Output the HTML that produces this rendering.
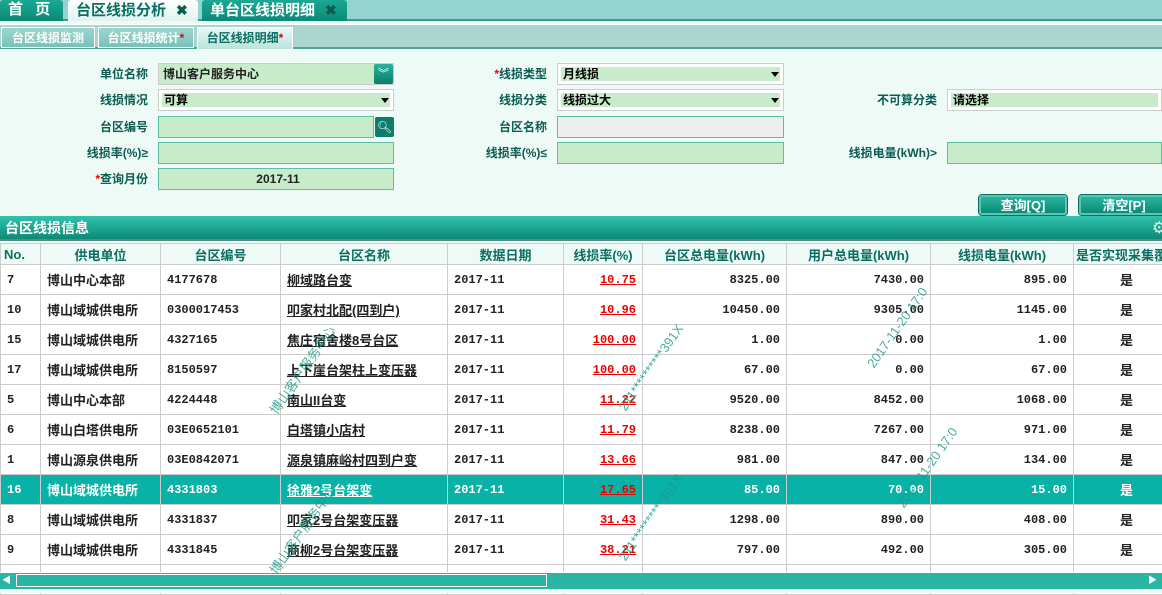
<!DOCTYPE html><html><head><meta charset="utf-8"><style>
*{box-sizing:border-box;margin:0;padding:0}
body{width:1162px;height:593px;overflow:hidden;background:#eefaf6;font-family:"Liberation Sans","Noto Sans CJK SC",sans-serif;font-size:12px;position:relative}
.abs{position:absolute}
.top{left:0;top:0;width:1162px;height:21px;background:#93d4d0;border-bottom:2px solid #3a9a8c}
.t{top:0;height:21px;color:#fff;font-size:15px;font-weight:bold;line-height:20px;padding-left:8px;background:linear-gradient(#1aa894,#0b8a76);border-radius:3px 3px 0 0}
.t.on{background:linear-gradient(#fff,#dff3ef);color:#0b6e62}
.x{color:#0b5c52;font-size:14px;margin-left:10px}
.sub{left:0;top:24px;width:1162px;height:25px;background:#acd5d0;border-top:1px solid #fff;border-bottom:2px solid #4aa597}
.st{top:27px;height:21px;color:#fff;font-weight:bold;font-size:12px;line-height:20px;text-align:center;background:linear-gradient(#9bd6ce,#78c2b8);border:1px solid #fff}
.st.on{background:linear-gradient(#e8f7f4,#b8e4dc);color:#0b6e62;height:23px}
.lb{font-weight:bold;color:#0b5c52;text-align:right;font-size:12px;line-height:22px}
.in{height:22px;background:#c8ecca;border:1px solid #5bbfa8;line-height:20px;padding-left:4px;font-weight:bold;color:#222}
.sel{background:#fff;border:1px solid #ccc;padding:3px}
.sel div{background:#c8ecca;height:14px;line-height:14px;font-weight:bold;padding-left:2px}
.arr{position:absolute;right:4px;top:8px;border:4px solid transparent;border-top:5px solid #000}
.btn{top:195px;height:20px;color:#fff;font-weight:bold;text-align:center;line-height:17px;font-size:13px;background:linear-gradient(#28b49e,#0b8a76);border:2px solid #5fc3b2;border-radius:3px;outline:1px solid #0b6e62}
.hd{left:0;top:216px;width:1162px;height:25px;background:linear-gradient(#31c2ae,#0b8a76);color:#fff;font-weight:bold;font-size:14px;line-height:25px;padding-left:5px;border-bottom:2px solid #5a8a84}
table{position:absolute;left:0;top:243px;border-collapse:collapse;table-layout:fixed;width:1180px;background:#fff}
td,th{border:1px solid #ccc;height:30px;white-space:nowrap;overflow:hidden;font-family:"Liberation Mono","Noto Sans CJK SC",monospace;font-size:12px;font-weight:bold;color:#222;padding:0 6px}
th{height:21px;background:#eefaf6;color:#0b6e62;font-family:"Liberation Sans","Noto Sans CJK SC",sans-serif;font-size:13px}
td.c{font-family:"Liberation Sans","Noto Sans CJK SC",sans-serif;font-size:13px}
td.n{text-align:right}
td.u{text-decoration:underline;font-family:"Liberation Sans","Noto Sans CJK SC",sans-serif;font-size:13px}
td.r{color:#e00;text-decoration:underline;text-align:right}
tr.hl td{background:#08b2a6;color:#fff}
tr.hl td.r{color:#e00}
.sb{left:0;top:572px;width:1162px;height:17px;background:#2ab5a3;border-top:1px solid #fff}
.wm{color:#1a9a88;font-size:13px;opacity:.8;transform:rotate(-55deg);white-space:nowrap}
</style></head><body>
<div class="abs top"></div>
<div class="abs t" style="left:0;width:63px;letter-spacing:4px">首 页</div>
<div class="abs t on" style="left:68px;width:130px">台区线损分析<span class="x">✖</span></div>
<div class="abs t" style="left:202px;width:145px">单台区线损明细<span class="x">✖</span></div>
<div class="abs sub"></div>
<div class="abs st" style="left:1px;width:94px">台区线损监测</div>
<div class="abs st" style="left:98px;width:96px">台区线损统计<span style="color:#e00">*</span></div>
<div class="abs st on" style="left:197px;width:96px">台区线损明细<span style="color:#e00">*</span></div>

<div class="abs lb" style="left:40px;width:108px;top:63px">单位名称</div>
<div class="abs in" style="left:158px;top:63px;width:236px;border-color:#ccc">博山客户服务中心</div>
<div class="abs" style="left:374px;top:64px;width:19px;height:20px;background:linear-gradient(#27b39e,#0b7d6a);color:#fff;font-size:11px;text-align:center;line-height:20px;border-radius:2px">︾</div>
<div class="abs lb" style="left:40px;width:108px;top:89px">线损情况</div>
<div class="abs sel" style="left:158px;top:89px;width:236px;height:22px"><div>可算</div><span class="arr"></span></div>
<div class="abs lb" style="left:40px;width:108px;top:116px">台区编号</div>
<div class="abs in" style="left:158px;top:116px;width:216px"></div>
<div class="abs" style="left:375px;top:117px;width:19px;height:20px;background:#0b7d6a;color:#fff;text-align:center;line-height:20px;border-radius:2px">🔍︎</div>
<div class="abs lb" style="left:40px;width:108px;top:142px">线损率(%)≥</div>
<div class="abs in" style="left:158px;top:142px;width:236px"></div>
<div class="abs lb" style="left:40px;width:108px;top:168px"><span style="color:#e00">*</span>查询月份</div>
<div class="abs in" style="left:158px;top:168px;width:236px;text-align:center">2017-11</div>

<div class="abs lb" style="left:440px;width:107px;top:63px"><span style="color:#e00">*</span>线损类型</div>
<div class="abs sel" style="left:557px;top:63px;width:227px;height:22px"><div>月线损</div><span class="arr"></span></div>
<div class="abs lb" style="left:440px;width:107px;top:89px">线损分类</div>
<div class="abs sel" style="left:557px;top:89px;width:227px;height:22px"><div>线损过大</div><span class="arr"></span></div>
<div class="abs lb" style="left:440px;width:107px;top:116px">台区名称</div>
<div class="abs in" style="left:557px;top:116px;width:227px;background:#eee"></div>
<div class="abs lb" style="left:440px;width:107px;top:142px">线损率(%)≤</div>
<div class="abs in" style="left:557px;top:142px;width:227px"></div>

<div class="abs lb" style="left:830px;width:107px;top:89px">不可算分类</div>
<div class="abs sel" style="left:947px;top:89px;width:215px;height:22px"><div>请选择</div></div>
<div class="abs lb" style="left:800px;width:137px;top:142px">线损电量(kWh)&gt;</div>
<div class="abs in" style="left:947px;top:142px;width:215px"></div>

<div class="abs btn" style="left:979px;width:88px">查询[Q]</div>
<div class="abs btn" style="left:1079px;width:90px">清空[P]</div>
<div class="abs hd">台区线损信息</div>
<div class="abs" style="left:1152px;top:218px;color:#eee;font-size:16px">⚙</div>

<table>
<colgroup><col style="width:40px"><col style="width:120px"><col style="width:120px"><col style="width:167px"><col style="width:116px"><col style="width:79px"><col style="width:144px"><col style="width:144px"><col style="width:143px"><col style="width:107px"></colgroup>
<tr><th style="text-align:left;padding-left:3px">No.</th><th>供电单位</th><th>台区编号</th><th>台区名称</th><th>数据日期</th><th>线损率(%)</th><th>台区总电量(kWh)</th><th>用户总电量(kWh)</th><th>线损电量(kWh)</th><th style="text-align:left;padding-left:2px">是否实现采集覆盖</th></tr>
<tr><td>7</td><td class="c">博山中心本部</td><td>4177678</td><td class="u">柳域路台变</td><td>2017-11</td><td class="r">10.75</td><td class="n">8325.00</td><td class="n">7430.00</td><td class="n">895.00</td><td class="c" style="padding-left:46px">是</td></tr>
<tr><td>10</td><td class="c">博山域城供电所</td><td>0300017453</td><td class="u">叩家村北配(四到户)</td><td>2017-11</td><td class="r">10.96</td><td class="n">10450.00</td><td class="n">9305.00</td><td class="n">1145.00</td><td class="c" style="padding-left:46px">是</td></tr>
<tr><td>15</td><td class="c">博山域城供电所</td><td>4327165</td><td class="u">焦庄宿舍楼8号台区</td><td>2017-11</td><td class="r">100.00</td><td class="n">1.00</td><td class="n">0.00</td><td class="n">1.00</td><td class="c" style="padding-left:46px">是</td></tr>
<tr><td>17</td><td class="c">博山域城供电所</td><td>8150597</td><td class="u">上下崖台架柱上变压器</td><td>2017-11</td><td class="r">100.00</td><td class="n">67.00</td><td class="n">0.00</td><td class="n">67.00</td><td class="c" style="padding-left:46px">是</td></tr>
<tr><td>5</td><td class="c">博山中心本部</td><td>4224448</td><td class="u">南山II台变</td><td>2017-11</td><td class="r">11.22</td><td class="n">9520.00</td><td class="n">8452.00</td><td class="n">1068.00</td><td class="c" style="padding-left:46px">是</td></tr>
<tr><td>6</td><td class="c">博山白塔供电所</td><td>03E0652101</td><td class="u">白塔镇小店村</td><td>2017-11</td><td class="r">11.79</td><td class="n">8238.00</td><td class="n">7267.00</td><td class="n">971.00</td><td class="c" style="padding-left:46px">是</td></tr>
<tr><td>1</td><td class="c">博山源泉供电所</td><td>03E0842071</td><td class="u">源泉镇麻峪村四到户变</td><td>2017-11</td><td class="r">13.66</td><td class="n">981.00</td><td class="n">847.00</td><td class="n">134.00</td><td class="c" style="padding-left:46px">是</td></tr>
<tr class="hl"><td>16</td><td class="c">博山域城供电所</td><td>4331803</td><td class="u">徐雅2号台架变</td><td>2017-11</td><td class="r">17.65</td><td class="n">85.00</td><td class="n">70.00</td><td class="n">15.00</td><td class="c" style="padding-left:46px">是</td></tr>
<tr><td>8</td><td class="c">博山域城供电所</td><td>4331837</td><td class="u">叩家2号台架变压器</td><td>2017-11</td><td class="r">31.43</td><td class="n">1298.00</td><td class="n">890.00</td><td class="n">408.00</td><td class="c" style="padding-left:46px">是</td></tr>
<tr><td>9</td><td class="c">博山域城供电所</td><td>4331845</td><td class="u">商柳2号台架变压器</td><td>2017-11</td><td class="r">38.21</td><td class="n">797.00</td><td class="n">492.00</td><td class="n">305.00</td><td class="c" style="padding-left:46px">是</td></tr>
<tr><td></td><td></td><td></td><td></td><td></td><td></td><td></td><td></td><td></td><td></td></tr>
</table>
<div class="abs sb"></div>
<div class="abs" style="left:2px;top:574px;width:12px;height:13px;color:#fff;font-size:9px;line-height:13px">◀</div>
<div class="abs" style="left:16px;top:574px;width:531px;height:13px;border:1px solid #fff;background:#2ab5a3"></div>
<div class="abs" style="left:1148px;top:574px;width:12px;height:13px;color:#fff;font-size:9px;line-height:13px">▶</div>
<div class="abs" style="left:0;top:589px;width:1162px;height:4px;background:#eefaf6"></div>

<div class="abs wm" style="left:250px;top:360px">博山客户服务中心</div>
<div class="abs wm" style="left:600px;top:360px">211**********391X</div>
<div class="abs wm" style="left:850px;top:320px">2017-11-20 17:0</div>
<div class="abs wm" style="left:250px;top:520px">博山客户服务中心</div>
<div class="abs wm" style="left:600px;top:510px">211**********391X</div>
<div class="abs wm" style="left:880px;top:460px">2017-11-20 17:0</div>
</body></html>
